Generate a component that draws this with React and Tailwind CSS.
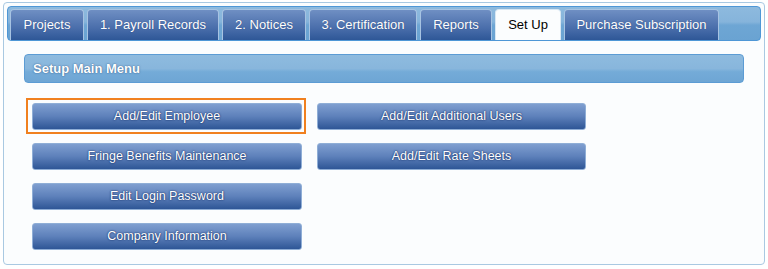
import React from "react";

const tabs = [
  { label: "Projects", w: "w-[74px]" },
  { label: "1. Payroll Records", w: "w-[132px]" },
  { label: "2. Notices", w: "w-[84px]" },
  { label: "3. Certification", w: "w-[108px]" },
  { label: "Reports", w: "w-[72px]" },
  { label: "Set Up", w: "w-[66px]", active: true },
  { label: "Purchase Subscription", w: "w-[155px]" },
];

const buttons = [
  { label: "Add/Edit Employee", focus: true },
  { label: "Add/Edit Additional Users" },
  { label: "Fringe Benefits Maintenance" },
  { label: "Add/Edit Rate Sheets" },
  { label: "Edit Login Password" },
  null,
  { label: "Company Information" },
  null,
];

export default function App() {
  return (
    <div className="w-[768px] h-[269px] bg-white pt-[2px] pl-[3px]" style={{ fontFamily: '"Liberation Sans", Arial, sans-serif' }}>
      <div className="w-[762px] h-[263px] border border-[#a9c9e2] rounded-[4px] bg-[#fbfdfe] p-[3px]">
        <div className="h-[35px] rounded-[4px] border border-[#4e97d6] bg-[linear-gradient(#8dbade,#86b4db_45%,#6ea6d4_55%,#6aa3d2)] flex items-end gap-[3px] pl-[2px] pt-[3px]">
          {tabs.map((t) =>
            t.active ? (
              <div
                key={t.label}
                className={`${t.w} h-[31px] rounded-t-[4px] bg-[#fbfdfe] border border-b-0 border-[#d8e7f3] flex items-center justify-center text-[13px] text-black`}
              >
                {t.label}
              </div>
            ) : (
              <div
                key={t.label}
                className={`${t.w} h-[31px] rounded-t-[4px] bg-[linear-gradient(#6f8fc3,#4a6eab_60%,#2e5797)] border border-b-0 border-[#a7c3e2] flex items-center justify-center text-[13px] text-white [text-shadow:0_0_1px_rgba(20,40,90,0.6)]`}
              >
                {t.label}
              </div>
            )
          )}
        </div>
        <div className="mx-[17px] mt-[13px] h-[29px] rounded-[4px] border border-[#5c9cd4] bg-[linear-gradient(#8ebbdf,#88b6dc_50%,#74abd8_62%,#6ea6d4)] flex items-center pl-[8px]">
          <span className="text-[13px] font-bold text-white [text-shadow:0_0_1px_rgba(40,80,130,0.8),0_0_2px_rgba(40,80,130,0.5)]">Setup Main Menu</span>
        </div>
        <div className="ml-[25px] mt-[20px] grid grid-cols-[270px_269px] gap-x-[15px] gap-y-[13px]">
          {buttons.map((b, i) =>
            b ? (
              <div key={i} className="relative">
                {b.focus && (
                  <div className="absolute -left-[6px] -right-[4px] -top-[5px] -bottom-[4px] border-[2.5px] border-[#f0801f]" />
                )}
                <div className="relative h-[27px] rounded-[3px] border border-[#8faed6] bg-[linear-gradient(#7f9fd0,#5d80ba_50%,#2e5696)] flex items-center justify-center text-[12.5px] text-white [text-shadow:0_0_1px_#1a3570,0_0_2px_rgba(20,45,100,0.9)]">
                  {b.label}
                </div>
              </div>
            ) : (
              <div key={i} />
            )
          )}
        </div>
      </div>
    </div>
  );
}
